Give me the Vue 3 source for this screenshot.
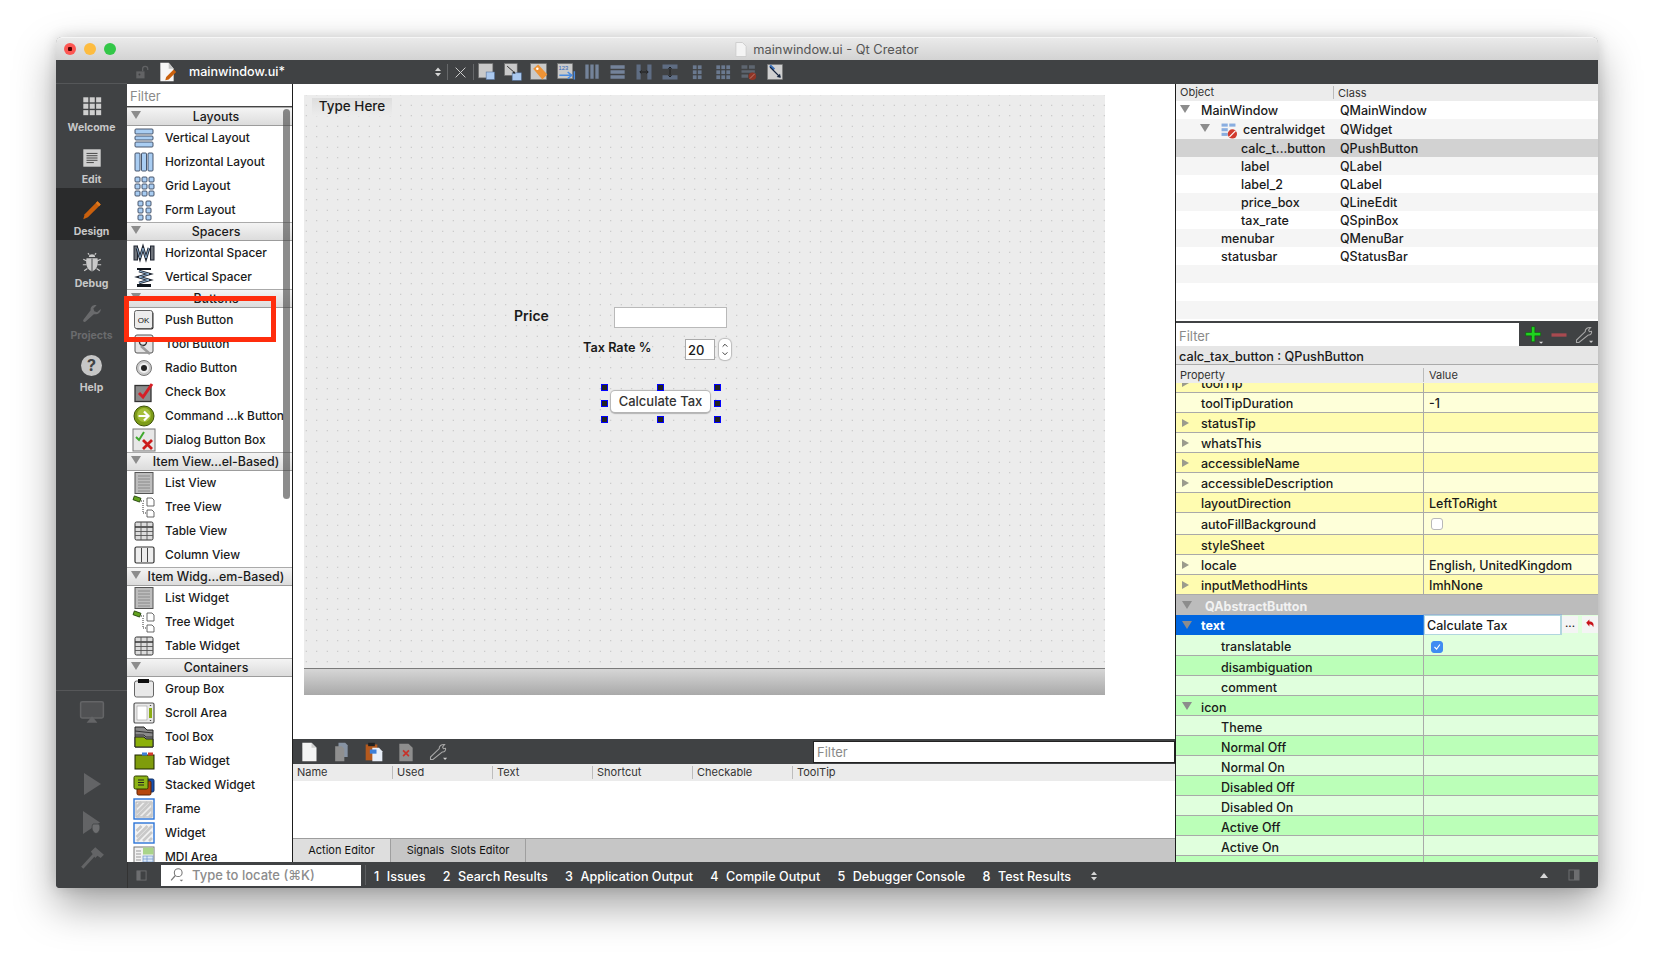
<script setup>
const bar = (x, y, w, h, c = '#a9cdf2', s = '#39465c') => `<rect x="${x}" y="${y}" width="${w}" height="${h}" rx="1" fill="${c}" stroke="${s}" stroke-width=".9"/>`
const hatch = `<g stroke="#c9c9c9" stroke-width="2.6"><path d="M4.500 10l5-5M4.500 16l11-11M5 20l15-15M11 20l9-9M17 20l3-3"/></g>`
const bug = (c) => `<path d="M8.6 6.5a3.4 3 0 0 1 6.8 0zM6 8h12c1 5 .2 13-6 14C5.800 21 5 13 6 8z" fill="${c}"/><path d="M12 8v14M6.500 11L2.500 9M17.500 11l4-2M6 15H2M18 15h4M7 19l-3.500 2.500M17 19l3.500 2.500M9 4L7.500 2.500M15 4l1.500-1.500" stroke="${c}" stroke-width="1.300" fill="none"/><path d="M12 8v14" stroke="#404244" stroke-width="1"/>`
const wrench = (c) => `<path d="M21.500 6.500l-4 3.500-3-1-1-3 3.500-3.500c-3.500-1-7 1.500-6.500 5.500L2.800 18c-1.500 1.500.8 3.700 2.300 2.300L14 12.200c4 1 8-2.200 7.500-5.700z" fill="${c}"/>`

const icons = {
  vl: bar(3, 3, 18, 5) + bar(3, 10, 18, 4) + bar(3, 16, 18, 5),
  hl: bar(3, 3, 5, 18) + bar(9.500, 3, 5, 18) + bar(16, 3, 5, 18),
  gl: [3, 10, 17].flatMap(x => [3, 10, 17].map(y => bar(x, y, 5, 5))).join(''),
  fl: [6, 14].flatMap(x => [3, 10, 17].map(y => bar(x, y, 5, 5))).join(''),
  hs: `<rect x="2" y="5" width="3.500" height="14" fill="#6f747b" stroke="#1f2530"/><rect x="18.500" y="5" width="3.500" height="14" fill="#6f747b" stroke="#1f2530"/><path d="M5 7l3 10 3-10 3 10 3-10" fill="none" stroke="#1f2530" stroke-width="2.800"/><path d="M5 7l3 10 3-10 3 10 3-10" fill="none" stroke="#9fc4e6" stroke-width=".8"/>`,
  vs: `<path d="M5 3h14v2H5zM5 19h14v3H5z" fill="#10151c"/><path d="M7 6l10 3-10 3 10 3-10 3" fill="none" stroke="#1f2530" stroke-width="2.800"/><path d="M7 6l10 3-10 3 10 3-10 3" fill="none" stroke="#9fc4e6" stroke-width=".9"/>`,
  ok: `<rect x="3.500" y="3.500" width="18" height="18" rx="2" fill="#2c2c2c"/><rect x="2.500" y="2.500" width="18" height="18" rx="2" fill="#ececec" stroke="#555" stroke-width=".9"/><text x="11.500" y="14.500" font-size="8" text-anchor="middle" fill="#111" font-family="Liberation Sans, sans-serif">OK</text>`,
  tool: `<rect x="3" y="3" width="18" height="18" rx="2" fill="#e4e4e4" stroke="#555"/><circle cx="11" cy="10" r="3.500" fill="none" stroke="#333" stroke-width="1.400"/><path d="M9 14l9 8" stroke="#999" stroke-width="2.500"/>`,
  radio: `<circle cx="12" cy="12" r="7.500" fill="#c9c9c9" stroke="#777"/><circle cx="12" cy="12" r="5" fill="#f0f0f0"/><circle cx="12" cy="12" r="3" fill="#222"/>`,
  check: `<rect x="3" y="5.500" width="16" height="16" fill="#8c8c8c" stroke="#333" stroke-width="1.300"/><path d="M7 13l4 4 9-13" fill="none" stroke="#d61f26" stroke-width="3"/>`,
  cmd: `<circle cx="12" cy="12" r="10" fill="#7d9c18" stroke="#3e5208"/><circle cx="12" cy="11" r="7" fill="#a4be3a"/><path d="M6.500 12h9M12 7.500l4.500 4.500-4.500 4.500" fill="none" stroke="#fff" stroke-width="2.200"/>`,
  dbb: `<rect x="1" y="1" width="22" height="22" fill="#e7e7e7" stroke="#777"/><path d="M4 9l3 3 5-8" fill="none" stroke="#3fa92d" stroke-width="2"/><path d="M11 12l9 9M20 12l-9 9" stroke="#cc1c1c" stroke-width="2.800"/>`,
  list: `<rect x="3" y="1.500" width="18" height="21" fill="#bdbdbd" stroke="#555"/><path d="M6 5h12M6 8h12M6 11h12M6 14h12M6 17h12M6 20h12" stroke="#8a8a8a"/>`,
  tree: `<rect x="1.500" y="2" width="7" height="4" transform="rotate(20 5 4)" fill="#62a21e" stroke="#1f3f08" stroke-width=".8"/><path d="M9 6h3M11 8v10h3" stroke="#333" stroke-dasharray="1 1" fill="none"/><path d="M15 3h5l2 2v6h-7zM15 15h5l2 2v5h-7z" fill="#fff" stroke="#444" stroke-width=".8"/>`,
  table: `<rect x="3" y="3" width="18" height="18" rx="1.500" fill="#dcdcdc" stroke="#333"/><path d="M3 8h18" stroke="#333" stroke-width="1.500"/><path d="M3 12.500h18M3 16.500h18M9 3v18M15 3v18" stroke="#555" stroke-width=".9"/>`,
  column: `<rect x="3" y="4" width="19" height="16" rx="1.500" fill="#eee" stroke="#333" stroke-width="1.200"/><path d="M9.500 5v14M15.500 5v14" stroke="#333" stroke-width=".9"/>`,
  group: `<rect x="2.500" y="4" width="19" height="16" rx="2" fill="#e8e8e8" stroke="#666"/><rect x="6" y="2" width="11" height="4" fill="#0e0e0e"/>`,
  scroll: `<rect x="2" y="2" width="20" height="20" rx="1.500" fill="#e8e8e8" stroke="#555" stroke-width="1.200"/><rect x="5" y="5" width="10" height="14" fill="#fff" stroke="#999" stroke-width=".6"/><rect x="17" y="7" width="3" height="10" fill="#8cad14"/><path d="M17.500 5l1-1 1 1zM17.500 19l1 1 1-1z" fill="#111"/>`,
  toolbox: `<path d="M3 2h9l3 3h6v17H3z" fill="#8a8a8a" stroke="#222"/><path d="M3 6l9 1 9 1M3 10h9l2 2h7" stroke="#333" fill="none"/><path d="M3 12h9l2 2h7v8H3z" fill="#8cb00a" stroke="#222"/>`,
  tab: `<rect x="3" y="6" width="19" height="14" fill="#7f9c0c" stroke="#1d2400"/><rect x="10" y="3.500" width="5" height="3" fill="#3f80d8"/><rect x="16" y="3.500" width="5" height="3" fill="#d23a2d"/>`,
  stacked: `<rect x="8" y="6" width="14" height="13" rx="1.500" fill="#164fb0" stroke="#0e2c60"/><rect x="5" y="8" width="14" height="14" rx="1.500" fill="#b5470e" stroke="#5d2504"/><rect x="2" y="3" width="14" height="13" rx="1.500" fill="#8db515" stroke="#2d3b03"/><path d="M6 7h6M6 9.500h6M6 12h6" stroke="#222"/>`,
  frame: `<rect x="2" y="2" width="20" height="20" fill="#f3f3f3" stroke="#2b74d8" stroke-width="1.400"/><rect x="4" y="5" width="16" height="15" fill="#eee" stroke="#8a8a8a" stroke-width=".6"/>` + hatch,
  widget: `<rect x="2" y="2" width="20" height="20" fill="#f3f3f3" stroke="#2b74d8" stroke-width="1.400"/>` + hatch,
  mdi: `<rect x="2" y="2" width="20" height="20" fill="#f2f2f2" stroke="#777"/><rect x="11" y="2.500" width="10.500" height="7" fill="#a9d48a"/><path d="M4 6h5M4 9h5M4 12h5M4 15h5M4 18h5" stroke="#999"/><rect x="11" y="11" width="10" height="9" fill="#dbe8f8" stroke="#6d94cc" stroke-width=".7"/><path d="M11 14h10M11 17h10M15 11v9" stroke="#6d94cc" stroke-width=".7"/>`,

  welcome: [2.500, 9.500, 16.500].flatMap(x => [2.500, 9.500, 16.500].map(y => `<rect x="${x}" y="${y}" width="5.500" height="5.500" fill="#cfcfcf"/>`)).join(''),
  edit: `<rect x="2.500" y="2.500" width="19" height="19" fill="#cfcfcf"/><path d="M6 7h12M6 9.500h12M6 12h12M6 14.500h12M6 17h8" stroke="#3b3b3b" stroke-width="1"/>`,
  design: `<path d="M18 2.500l3.500 3.500L7.500 20l-5 2 1.500-5.500z" fill="#c9600d"/><path d="M18 2.500l3.500 3.500-1.800 1.800-3.500-3.500z" fill="#e07b1f"/>`,
  debug: bug('#c9c9c9'),
  projects: wrench('#696a6c'),
  monitor: `<rect x="1.500" y="2.500" width="21" height="15" rx="1.500" fill="#505153" stroke="#646567" stroke-width="1.400"/><path d="M12 16l-5 6h10z" fill="#646567"/>`,
  run: `<path d="M4 1l17 11L4 23z" fill="#636466"/>`,
  drun: `<path d="M3 0l17 11.500L3 23z" fill="#636466"/><path d="M13 13h6c2 3 .8 9-3 9.500-3.800-.5-5-6.500-3-9.500z" fill="#6d6e70" stroke="#404244" stroke-width=".8"/>`,
  hammer: `<path d="M3 21l11-12" stroke="#636466" stroke-width="2.800"/><path d="M11 6l4-4 8 7-3 3-3-2-2 2z" fill="#636466"/>`,

  lock: `<rect x="2" y="10" width="13" height="11" fill="#626365"/><circle cx="7" cy="15" r="1.500" fill="#404244"/><path d="M12 10V6a4 4 0 0 1 8 0v2" fill="none" stroke="#626365" stroke-width="2"/>`,
  doc: `<path d="M4 1h10l6 7v15H4z" fill="#f6f6f6"/><path d="M14 1l6 7h-6z" fill="#c4c4c4"/><path d="M10 22l1-4 9-9 3 3-9 9z" fill="#c9600d"/>`,
  t1: `<rect x="2" y="2" width="17" height="17" fill="#c9c9c9" stroke="#777" stroke-width=".7"/><rect x="11" y="12" width="10" height="9" fill="#aac8ee" stroke="#55729c" stroke-width=".7"/>`,
  t2: `<rect x="2" y="2" width="15" height="14" fill="#c9c9c9" stroke="#777" stroke-width=".7"/><rect x="11" y="13" width="11" height="9" fill="#aac8ee" stroke="#55729c" stroke-width=".7"/><path d="M5 5l8 7" stroke="#222" stroke-width="1.100"/><path d="M15 14l-4-.5 2.500-2.500z" fill="#222"/>`,
  t3: `<rect x="2" y="2" width="19" height="19" fill="#c9c9c9" stroke="#777" stroke-width=".7"/><path d="M5 8l6-5 11 12-6 6z" fill="#ee9335"/><circle cx="10" cy="8" r="1.500" fill="#fff"/>`,
  t4: `<rect x="2" y="2" width="18" height="18" fill="#c9c9c9" stroke="#777" stroke-width=".7"/><text x="3" y="9" font-size="7" fill="#2f65b8" font-family="Liberation Sans, sans-serif">123</text><path d="M4 16h14M14 12l5 4-5 4M22 11v10" stroke="#4a8be0" stroke-width="1.800" fill="none"/>`,
  t5: `<path d="M4 3h4v17H4zM10 3h4v17h-4zM16 3h4v17h-4z" fill="#74839a"/>`,
  t6: `<path d="M3 4h17v4H3zM3 10h17v4H3zM3 16h17v4H3z" fill="#74839a"/>`,
  t7: `<path d="M3 3h5v18H3zM16 3h5v18h-5z" fill="#5f6d83"/><path d="M7 12h10M9 10l-2 2 2 2M15 10l2 2-2 2" stroke="#1c1c1c" stroke-width="1.100" fill="none"/>`,
  t8: `<path d="M3 3h18v5H3zM3 16h18v5H3z" fill="#5f6d83"/><path d="M12 6v12M10 8l2-2 2 2M10 16l2 2 2-2" stroke="#1c1c1c" stroke-width="1.100" fill="none"/>`,
  t9: [7, 13].flatMap(x => [4, 10, 16].map(y => `<rect x="${x}" y="${y}" width="4.500" height="4.500" fill="#6a798f"/>`)).join(''),
  t10: [4, 10, 16].flatMap(x => [4, 10, 16].map(y => `<rect x="${x}" y="${y}" width="4.500" height="4.500" fill="#6a798f"/>`)).join(''),
  t11: `<path d="M3 4h7v4H3zM12 4h7v4h-7zM3 10h16v3H3zM3 15h8v4H3z" fill="#5e6670"/><circle cx="16" cy="17" r="4.500" fill="#8f3526"/><path d="M13 20l6-6" stroke="#c58a7c" stroke-width="1"/>`,
  t12: `<rect x="3" y="3" width="18" height="18" fill="#d0d0d0" stroke="#777" stroke-width=".7"/><path d="M6 4l5 5" stroke="#3a6fb8" stroke-width="3"/><path d="M6 6l12 12" stroke="#14233c" stroke-width="1.300"/><path d="M19 19l-5-1 4-4z" fill="#14233c"/>`,

  plus: `<path d="M9 2h4v7h7v4h-7v7H9v-7H2V9h7z" fill="#1fd31f" stroke="#0d5c0d" stroke-width=".7"/><path d="M18 20h5l-2.500 2.500z" fill="#ddd"/>`,
  minus: `<rect x="3" y="10" width="18" height="4" fill="#a84a50"/>`,
  wtool: `<path d="M20 3l-2.500 3 1 2 2.500-.500c.8 2-1 5-4 4.500L6 21H3v-3L13.500 8c-.5-3 2.500-5.500 6.500-5z" fill="none" stroke="#a7a7a7" stroke-width="1.300"/><path d="M18 19h5l-2.500 2.500z" fill="#ccc"/>`,
  anew: `<path d="M4 1h11l6 6v16H4z" fill="#f4f4f4"/><path d="M15 1l6 6h-6z" fill="#cfcfcf"/>`,
  acopy: `<path d="M9 1h8l3 3v14H9z" fill="#8793a3"/><path d="M5 5h8l3 3v15H5z" fill="#8f8f8f"/>`,
  apaste: `<rect x="2" y="3" width="14" height="19" fill="#b5591d"/><rect x="5" y="1" width="8" height="4" fill="#222"/><path d="M10 7h8l4 4v12H10z" fill="#e8eef8"/><rect x="7" y="9" width="8" height="5" fill="#3d7fd9"/>`,
  adel: `<path d="M4 2h11l5 5v16H4z" fill="#8e8e8e"/><path d="M8.500 10l7 7M15.500 10l-7 7" stroke="#c8322a" stroke-width="2"/>`,
  reset: `<path d="M5 9l5-5v3c5 0 8 3 6 9-1-3-3-4.500-6-4.500V15z" fill="#c8121a"/>`,
  search: `<circle cx="13" cy="8" r="5.500" fill="none" stroke="#777" stroke-width="1.500"/><path d="M9 12l-6 7" stroke="#777" stroke-width="1.700"/><path d="M15 18h5l-2.500 2.500z" fill="#777"/>`,
  toggle: `<rect x="2" y="2" width="8" height="20" fill="#6d6e70"/><rect x="2" y="2" width="20" height="20" fill="none" stroke="#6d6e70" stroke-width="2"/>`,
  toggleR: `<rect x="12" y="2" width="10" height="20" fill="#6d6e70"/><rect x="2" y="2" width="20" height="20" fill="none" stroke="#6d6e70" stroke-width="2"/>`,
  stepper: `<path d="M12 3l6 7H6zM12 21l-6-7h12z" fill="#d6d6d6"/>`,
  close: `<path d="M3 3l18 18M21 3L3 21" stroke="#cfcfcf" stroke-width="1.800"/>`,
  central: `<rect x="2" y="2" width="8" height="4" fill="#8aaee0"/><rect x="12" y="2" width="8" height="4" fill="#8aaee0"/><rect x="2" y="8" width="8" height="4" fill="#8aaee0"/><rect x="2" y="14" width="8" height="4" fill="#8aaee0"/><circle cx="16" cy="15.500" r="6" fill="#d23a2d"/><path d="M12 19.500l8-8" stroke="#fff" stroke-width="1.500"/>`
}

const modes = [
  { k: 'welcome', l: 'Welcome' },
  { k: 'edit', l: 'Edit' },
  { k: 'design', l: 'Design', active: true },
  { k: 'debug', l: 'Debug' },
  { k: 'projects', l: 'Projects', dim: true }
]
const runIcons = ['run', 'drun', 'hammer']
const toolIcons = ['t1', 't2', 't3', 't4', 't5', 't6', 't7', 't8', 't9', 't10', 't11', 't12']

const sections = [
  { t: 'Layouts', items: [['vl', 'Vertical Layout'], ['hl', 'Horizontal Layout'], ['gl', 'Grid Layout'], ['fl', 'Form Layout']] },
  { t: 'Spacers', items: [['hs', 'Horizontal Spacer'], ['vs', 'Vertical Spacer']] },
  { t: 'Buttons', items: [['ok', 'Push Button'], ['tool', 'Tool Button'], ['radio', 'Radio Button'], ['check', 'Check Box'], ['cmd', 'Command ...k Button'], ['dbb', 'Dialog Button Box']] },
  { t: 'Item View...el-Based)', items: [['list', 'List View'], ['tree', 'Tree View'], ['table', 'Table View'], ['column', 'Column View']] },
  { t: 'Item Widg...em-Based)', items: [['list', 'List Widget'], ['tree', 'Tree Widget'], ['table', 'Table Widget']] },
  { t: 'Containers', items: [['group', 'Group Box'], ['scroll', 'Scroll Area'], ['toolbox', 'Tool Box'], ['tab', 'Tab Widget'], ['stacked', 'Stacked Widget'], ['frame', 'Frame'], ['widget', 'Widget'], ['mdi', 'MDI Area']] }
]

const objects = [
  { n: 'MainWindow', c: 'QMainWindow', pad: 25, arrow: 10, h: 18 },
  { n: 'centralwidget', c: 'QWidget', pad: 67, arrow: 30, ico: true, h: 20 },
  { n: 'calc_t...button', c: 'QPushButton', pad: 65, h: 18, sel: true },
  { n: 'label', c: 'QLabel', pad: 65, h: 18 },
  { n: 'label_2', c: 'QLabel', pad: 65, h: 18 },
  { n: 'price_box', c: 'QLineEdit', pad: 65, h: 18 },
  { n: 'tax_rate', c: 'QSpinBox', pad: 65, h: 18 },
  { n: 'menubar', c: 'QMenuBar', pad: 45, h: 18 },
  { n: 'statusbar', c: 'QStatusBar', pad: 45, h: 18 },
  { n: '', c: '', pad: 0, h: 18 },
  { n: '', c: '', pad: 0, h: 18 },
  { n: '', c: '', pad: 0, h: 18 }
]

const props = [
  { n: 'toolTip', t: 'yd', a: 'r', h: 20 },
  { n: 'toolTipDuration', v: '-1', t: 'yl', h: 20 },
  { n: 'statusTip', t: 'yd', a: 'r', h: 20 },
  { n: 'whatsThis', t: 'yl', a: 'r', h: 20 },
  { n: 'accessibleName', t: 'yd', a: 'r', h: 20 },
  { n: 'accessibleDescription', t: 'yl', a: 'r', h: 20 },
  { n: 'layoutDirection', v: 'LeftToRight', t: 'yd', h: 20 },
  { n: 'autoFillBackground', t: 'yl', box: true, h: 22 },
  { n: 'styleSheet', t: 'yd', h: 20 },
  { n: 'locale', v: 'English, UnitedKingdom', t: 'yl', a: 'r', h: 20 },
  { n: 'inputMethodHints', v: 'ImhNone', t: 'yd', a: 'r', h: 20 },
  { n: 'QAbstractButton', t: 'head', a: 'd', h: 20.500 },
  { n: 'text', t: 'sel', a: 'd', h: 19.500, edit: true },
  { n: 'translatable', t: 'gl', sub: true, checked: true, h: 21.500 },
  { n: 'disambiguation', t: 'gd', sub: true, h: 20 },
  { n: 'comment', t: 'gl', sub: true, h: 20 },
  { n: 'icon', t: 'gd', a: 'd', h: 20 },
  { n: 'Theme', t: 'gl', sub: true, h: 20 },
  { n: 'Normal Off', t: 'gd', sub: true, h: 20 },
  { n: 'Normal On', t: 'gl', sub: true, h: 20 },
  { n: 'Disabled Off', t: 'gd', sub: true, h: 20 },
  { n: 'Disabled On', t: 'gl', sub: true, h: 20 },
  { n: 'Active Off', t: 'gd', sub: true, h: 20 },
  { n: 'Active On', t: 'gl', sub: true, h: 20 },
  { n: '', t: 'gd', sub: true, h: 20 }
]
const rowLine = (p) => p.h + (p.t[0] === 'y' ? 2 : 3) + 'px'

const actionCols = ['Name', 'Used', 'Text', 'Shortcut', 'Checkable', 'ToolTip']
const outputs = [['1', 'Issues'], ['2', 'Search Results'], ['3', 'Application Output'], ['4', 'Compile Output'], ['5', 'Debugger Console'], ['8', 'Test Results']]
const handles = [[296.5, 288.5], [352.5, 288.5], [409.5, 288.5], [296.5, 304.5], [409.5, 304.5], [296.5, 320.5], [352.5, 320.5], [409.5, 320.5]]
</script>

<template>
  <div class="page">
    <div class="window">
      <header class="titlebar">
        <div class="lights"><i class="red"></i><i class="yellow"></i><i class="green"></i></div>
        <div class="title">
          <svg class="titledoc" viewBox="0 0 12 16"><path d="M.5.500h7l4 4v11H.5z" fill="#f4f4f4" stroke="#ccc" /></svg>
          <span>mainwindow.ui - Qt Creator</span>
        </div>
      </header>

      <div class="body">
        <aside class="sidebar">
          <div class="side-top"></div>
          <div v-for="m in modes" :key="m.k" class="mode" :class="{ active: m.active, dim: m.dim }">
            <svg class="mode-ic" viewBox="0 0 24 24" v-html="icons[m.k]"></svg>
            <span>{{ m.l }}</span>
          </div>
          <div class="mode">
            <div class="help-ic">?</div>
            <span>Help</span>
          </div>
          <div class="side-fill"></div>
          <div class="side-run">
            <svg class="monitor" viewBox="0 0 24 24" v-html="icons.monitor"></svg>
            <svg v-for="r in runIcons" :key="r" class="run-ic" :class="r" viewBox="0 0 24 24" v-html="icons[r]"></svg>
          </div>
        </aside>

        <div class="main">
          <div class="toolbar">
            <svg class="lock" viewBox="0 0 22 22" v-html="icons.lock"></svg>
            <svg class="docic" viewBox="0 0 24 24" v-html="icons.doc"></svg>
            <span class="filename">mainwindow.ui*</span>
            <svg class="tstep" viewBox="0 0 24 24" v-html="icons.stepper"></svg>
            <i class="tsep"></i>
            <svg class="tclose" viewBox="0 0 24 24" v-html="icons.close"></svg>
            <i class="tsep"></i>
            <div class="ticons">
              <svg v-for="t in toolIcons" :key="t" class="tic" viewBox="0 0 24 24" v-html="icons[t]"></svg>
            </div>
          </div>

          <div class="workspace">
            <section class="widgetbox">
              <div class="wb-filter">Filter</div>
              <div v-for="s in sections" :key="s.t">
                <div class="wb-head"><i class="tri-d"></i><span>{{ s.t }}</span></div>
                <div v-for="it in s.items" :key="it[1]" class="wb-item">
                  <svg class="wb-ic" viewBox="0 0 24 24" v-html="icons[it[0]]"></svg>
                  <span>{{ it[1] }}</span>
                </div>
              </div>
              <div class="wb-scroll"></div>
            </section>

            <section class="center">
              <div class="canvas">
                <div class="form">
                  <div class="menu">Type Here</div>
                  <div class="w-price">Price</div>
                  <div class="w-line"></div>
                  <div class="w-tax">Tax Rate %</div>
                  <div class="w-spin">20</div>
                  <div class="w-step"><svg viewBox="0 0 12 22"><path d="M3.500 8L6 5.500 8.500 8M3.500 14L6 16.500 8.500 14" fill="none" stroke="#333" stroke-width="1" /></svg></div>
                  <div class="w-btn">Calculate Tax</div>
                  <i v-for="(h, i) in handles" :key="i" class="handle" :style="{ left: h[0] + 'px', top: h[1] + 'px' }"></i>
                  <div class="form-status"></div>
                </div>
              </div>

              <div class="actions">
                <div class="act-bar">
                  <div class="act-icons">
                    <svg class="act-ic" viewBox="0 0 24 24" v-html="icons.anew"></svg>
                    <svg class="act-ic" viewBox="0 0 24 24" v-html="icons.acopy"></svg>
                    <svg class="act-ic" viewBox="0 0 24 24" v-html="icons.apaste"></svg>
                    <svg class="act-ic" viewBox="0 0 24 24" v-html="icons.adel"></svg>
                    <svg class="act-ic" viewBox="0 0 24 24" v-html="icons.wtool"></svg>
                  </div>
                  <div class="act-filter">Filter</div>
                </div>
                <div class="act-cols"><span v-for="c in actionCols" :key="c">{{ c }}</span></div>
                <div class="act-empty"></div>
                <div class="tabs">
                  <span class="tab on">Action Editor</span>
                  <span class="tab">Signals&nbsp;&nbsp;Slots Editor</span>
                </div>
              </div>
            </section>

            <section class="right">
              <div class="ins-head"><span class="c1">Object</span><span class="c2">Class</span></div>
              <div v-for="(o, i) in objects" :key="i" class="ins-row" :class="{ alt: i % 2 === 1, sel: o.sel }" :style="{ height: o.h + 'px' }">
                <div class="c1" :style="{ paddingLeft: o.pad + 'px' }">
                  <i v-if="o.arrow" class="tri-d abs" :style="{ left: o.arrow - 6 + 'px' }"></i>
                  <svg v-if="o.ico" class="ins-ic" viewBox="0 0 22 22" v-html="icons.central"></svg>
                  {{ o.n }}
                </div>
                <div class="c2">{{ o.c }}</div>
              </div>
              <div class="darkstrip"></div>
              <div class="prop-filter">
                <div class="pf-input">Filter</div>
                <svg class="pf-ic" viewBox="0 0 24 24" v-html="icons.plus"></svg>
                <svg class="pf-ic" viewBox="0 0 24 24" v-html="icons.minus"></svg>
                <svg class="pf-ic" viewBox="0 0 24 24" v-html="icons.wtool"></svg>
              </div>
              <div class="classrow">calc_tax_button : QPushButton</div>
              <div class="prop-head"><span class="p1">Property</span><span class="p2">Value</span></div>
              <div class="props">
                <div class="props-inner">
                  <div v-for="p in props" :key="p.n" class="prop" :class="p.t" :style="{ height: p.h + 'px', lineHeight: rowLine(p) }">
                    <div class="p1" :class="{ sub: p.sub }">
                      <i v-if="p.a === 'r'" class="tri-r"></i>
                      <i v-if="p.a === 'd'" class="tri-d abs2"></i>
                      {{ p.n }}
                    </div>
                    <div class="p2">
                      <template v-if="p.edit">
                        <span class="ed-input">Calculate Tax</span>
                        <span class="ed-btn">...</span>
                        <span class="ed-btn red"><svg viewBox="0 0 22 22" v-html="icons.reset"></svg></span>
                      </template>
                      <i v-else-if="p.box" class="cb"></i>
                      <i v-else-if="p.checked" class="cb on"><svg viewBox="0 0 12 12"><path d="M3 6l2.500 2.500L9.500 3" fill="none" stroke="#fff" stroke-width="1.300" /></svg></i>
                      <template v-else>{{ p.v }}</template>
                    </div>
                  </div>
                </div>
              </div>
            </section>
          </div>

          <footer class="status">
            <svg class="st-toggle" viewBox="0 0 24 24" v-html="icons.toggle"></svg>
            <div class="locator">
              <svg class="loc-ic" viewBox="0 0 24 24" v-html="icons.search"></svg>
              <span>Type to locate (⌘K)</span>
            </div>
            <i class="st-sep"></i>
            <div class="outs">
              <span v-for="o in outputs" :key="o[0]" class="out"><b>{{ o[0] }}</b>{{ o[1] }}</span>
              <svg class="out-step" viewBox="0 0 24 24" v-html="icons.stepper"></svg>
            </div>
            <div class="st-right">
              <i class="up"></i>
              <svg class="st-toggle2" viewBox="0 0 24 24" v-html="icons.toggleR"></svg>
            </div>
          </footer>
        </div>
      </div>

      <div class="redbox"></div>
    </div>
  </div>
</template>

<style>
html, body { margin: 0; background: #fff; }
</style>

<style scoped>
.page {
  width: 1654px; height: 962px; box-sizing: border-box; padding: 37px 56px 0;
  background: #fff; overflow: hidden;
  font-family: Inter, "Liberation Sans", sans-serif; font-size: 12px; color: #1a1a1a;
}
.window {
  position: relative; width: 1542px; height: 851px; display: flex; flex-direction: column;
  border-radius: 6px 6px 4px 4px;
  box-shadow: 0 18px 42px rgba(0,0,0,.36), 0 0 14px rgba(0,0,0,.14);
  background: #404244;
}
.titlebar {
  height: 23px; flex: none; position: relative; display: flex; align-items: center; justify-content: center;
  background: linear-gradient(#ebebeb, #d3d3d3); border-radius: 6px 6px 0 0;
  box-shadow: inset 0 1px 0 #f6f6f6;
}
.lights { position: absolute; left: 8px; top: 6px; display: flex; gap: 8px; }
.lights i { width: 12px; height: 12px; border-radius: 50%; display: block; }
.red { background: radial-gradient(circle, #4d0000 0 2px, #fc5753 2.500px); }
.yellow { background: #fdbc40; }
.green { background: #33c748; }
.title { display: flex; align-items: center; gap: 6px; font-size: 12.800px; color: #555; padding-top: 1px; }
.titledoc { width: 12px; height: 15px; }

.body { flex: 1; display: flex; min-height: 0; }
.sidebar { width: 71px; flex: none; display: flex; flex-direction: column; background: #404244; border-radius: 0 0 0 4px; }
.side-top { height: 23px; border-bottom: 1px solid #555759; }
.mode { height: 52px; display: flex; flex-direction: column; align-items: center; color: #c8c8c8; font-size: 10.500px; font-weight: 700; box-sizing: border-box; padding-top: 11px; }
.mode-ic { width: 22px; height: 22px; display: block; }
.mode span { margin-top: 4px; line-height: 13px; }
.mode.active { background: #2a2b2c; }
.mode.dim { color: #6a6b6d; }
.help-ic { width: 21px; height: 21px; margin-bottom: 1px; border-radius: 50%; background: #c6c6c6; color: #404244; font-size: 16px; font-weight: 700; line-height: 21px; text-align: center; }
.side-fill { flex: 1; }
.side-run { height: 198px; flex: none; border-top: 1px solid #565759; display: flex; flex-direction: column; align-items: center; box-sizing: border-box; padding-top: 8px; }
.monitor { width: 26px; height: 26px; margin-bottom: 47px; }
.run-ic { width: 24px; height: 24px; margin-bottom: 15px; }
.run-ic.drun { margin-bottom: 10px; }
.run-ic.hammer { width: 26px; height: 26px; }

.main { flex: 1; min-width: 0; display: flex; flex-direction: column; }
.toolbar { height: 24px; flex: none; display: flex; align-items: center; background: #404244; }
.lock { width: 14px; height: 14px; margin-left: 8px; }
.docic { width: 20px; height: 20px; margin-left: 8px; }
.filename { width: 244px; margin-left: 12px; margin-top: -1px; color: #fff; font-size: 12.600px; font-weight: 500; }
.tstep { width: 12px; height: 14px; margin-left: -1px; }
.tsep { width: 1px; height: 16px; background: #66686a; }
.tstep + .tsep { margin-left: 3px; }
.tclose { width: 13px; height: 13px; margin: 0 6px; }
.ticons { display: flex; gap: 6.200px; margin-left: 3px; }
.tic { width: 20px; height: 20px; }

.workspace { flex: 1; min-height: 0; display: flex; }
.widgetbox { width: 165px; flex: none; background: #fff; border-right: 1px solid #1d1d1d; position: relative; overflow: hidden; }
.wb-filter { height: 21.500px; box-sizing: content-box; line-height: 25px; padding-left: 3px; border-bottom: 1px solid #444; color: #8a8a8a; font-size: 13px; overflow: hidden; }
.wb-head { height: 19px; box-sizing: border-box; position: relative; display: flex; align-items: center; justify-content: center; padding-left: 13px; background: linear-gradient(#f4f4f4, #dcdcdc); border-top: 1px solid #aaa; border-bottom: 1px solid #9c9c9c; font-size: 12.400px; font-weight: 500; white-space: nowrap; }
.wb-item { height: 24px; display: flex; align-items: center; padding-left: 5px; white-space: nowrap; font-size: 11.900px; font-weight: 500; }
.wb-ic { width: 24px; height: 24px; flex: none; margin-right: 9px; }
.wb-scroll { position: absolute; right: 2px; top: 25px; width: 7px; height: 390px; border-radius: 4px; background: rgba(70,70,70,.62); }
.tri-d { display: block; width: 0; height: 0; border-left: 5px solid transparent; border-right: 5px solid transparent; border-top: 8px solid #8c8c8c; }
.wb-head .tri-d { position: absolute; left: 4px; top: 3px; }
.tri-r { position: absolute; left: 6px; top: 6px; width: 0; height: 0; border-top: 4.500px solid transparent; border-bottom: 4.500px solid transparent; border-left: 7px solid #9b9b8c; }

.center { width: 882px; flex: none; display: flex; flex-direction: column; background: #fff; }
.canvas { flex: 1; min-height: 0; padding: 11px 0 0 11px; }
.form {
  position: relative; width: 801px; height: 600px; background-color: #ececec;
  background-image: radial-gradient(circle, #b2b2b2 .5px, rgba(178,178,178,0) .95px);
  background-size: 10.500px 10.500px; background-position: -3px 5px;
}
.menu { position: absolute; left: 8px; top: 3px; width: 80px; height: 18px; line-height: 16px; text-align: center; box-sizing: border-box; font-size: 13.500px; font-weight: 500; background: linear-gradient(#dedede, #ececec); }
.w-price { position: absolute; left: 210px; top: 212px; font-size: 14px; font-weight: 600; }
.w-line { position: absolute; left: 310px; top: 212px; width: 113px; height: 21px; box-sizing: border-box; background: #fff; border: 1px solid #b9b9b9; }
.w-tax { position: absolute; left: 279px; top: 245px; font-size: 12.700px; font-weight: 600; }
.w-spin { position: absolute; left: 381px; top: 243.500px; width: 30px; height: 21px; box-sizing: border-box; background: #fff; border: 1px solid #aaa; font-size: 13px; font-weight: 500; line-height: 20px; padding-left: 2px; }
.w-step { position: absolute; left: 415px; top: 243.500px; width: 12px; height: 21px; background: #fff; border-radius: 5px; box-shadow: 0 0 1px 1px #bbb; }
.w-step svg { display: block; width: 12px; height: 21px; }
.w-btn { position: absolute; left: 307px; top: 296px; width: 99px; height: 21px; line-height: 20px; text-align: center; background: #fff; border-radius: 4px; box-shadow: 0 .500px 1px 1px #b4b4b4; font-size: 13px; font-weight: 500; color: #333; }
.handle { position: absolute; width: 5px; height: 5px; background: #222; border: 1px solid #0000ff; }
.form-status { position: absolute; left: 0; right: 0; bottom: 0; height: 27px; box-sizing: border-box; border-top: 1px solid #7a7a7a; background: linear-gradient(#d6d6d6, #a9a9a9); }

.actions { height: 123px; flex: none; display: flex; flex-direction: column; }
.act-bar { height: 25px; flex: none; background: #404244; display: flex; align-items: center; }
.act-icons { display: flex; gap: 12.300px; padding-left: 6px; width: 514px; box-sizing: content-box; }
.act-ic { width: 20px; height: 20px; flex: none; }
.act-filter { flex: 1; height: 22px; box-sizing: border-box; background: #fff; border: 1px solid #222; padding-left: 3px; line-height: 20px; color: #8a8a8a; font-size: 13px; }
.act-cols { height: 17px; flex: none; background: #ebebeb; display: flex; align-items: center; font-size: 11px; color: #333; }
.act-cols span { width: 100px; box-sizing: border-box; padding-left: 4px; border-right: 1px solid #bdbdbd; line-height: 13px; }
.act-cols span:last-child { border: 0; }
.act-empty { flex: 1; }
.tabs { height: 24px; flex: none; display: flex; background: #c6c6c6; border-top: 1px solid #9d9d9d; box-sizing: border-box; font-size: 11px; color: #111; }
.tab { width: 134px; text-align: center; line-height: 22px; border-right: 1px solid #9f9f9f; }
.tab.on { width: 97px; background: #dedede; }

.right { flex: 1; min-width: 0; background: #fff; border-left: 1px solid #1d1d1d; display: flex; flex-direction: column; }
.ins-head { height: 17px; flex: none; background: #ececec; display: flex; align-items: center; font-size: 11px; color: #333; }
.ins-head .c1 { width: 158px; padding-left: 4px; box-sizing: border-box; border-right: 1px solid #bbb; line-height: 13px; }
.ins-head .c2 { padding-left: 4px; }
.ins-row { display: flex; align-items: center; flex: none; font-size: 12.500px; font-weight: 500; }
.ins-row.alt { background: #f5f5f5; }
.ins-row.sel { background: #d2d2d2; }
.ins-row .c1 { position: relative; width: 164px; box-sizing: border-box; white-space: nowrap; display: flex; align-items: center; }
.abs { position: absolute; top: 2px; }
.ins-ic { width: 17px; height: 17px; position: absolute; left: 44px; top: 0; }
.darkstrip { height: 4px; flex: none; background: linear-gradient(#fff 0 2.500px, #404244 2.500px); }
.prop-filter { height: 23px; flex: none; background: #404244; display: flex; align-items: center; }
.pf-input { width: 343px; height: 23px; background: #fff; color: #8a8a8a; font-size: 13px; line-height: 26px; padding-left: 3px; box-sizing: border-box; margin-right: 3px; overflow: hidden; }
.pf-ic { width: 20px; height: 20px; margin: 0 3px 0 2px; flex: none; }
.classrow { height: 19px; flex: none; box-sizing: border-box; padding-left: 3px; padding-top: 2px; line-height: 18px; font-size: 12.700px; font-weight: 500; background: #e6e6e6; border-bottom: 1px solid #aaa; overflow: hidden; }
.prop-head { height: 18px; flex: none; display: flex; align-items: center; background: #ececec; font-size: 11px; color: #333; padding-top: 1px; box-sizing: border-box; }
.prop-head .p1 { width: 248px; box-sizing: border-box; padding-left: 4px; border-right: 1px solid #bbb; line-height: 14px; }
.prop-head .p2 { padding-left: 5px; }
.props { flex: 1; min-height: 0; overflow: hidden; }
.props-inner { margin-top: -10.500px; }
.prop { display: flex; box-sizing: border-box; border-bottom: 1px solid #a9a9a9; font-size: 12.500px; font-weight: 500; position: relative; }
.prop .p1 { width: 248px; flex: none; box-sizing: border-box; padding-left: 25px; white-space: nowrap; border-right: 1px solid #a9a9a9; }
.prop .p1.sub { padding-left: 45px; }
.prop .p2 { flex: 1; min-width: 0; padding-left: 5px; position: relative; white-space: nowrap; }
.yl { background: #feffd9; }
.yd { background: #fffcb0; }
.gl { background: #e0ffdd; }
.gd { background: #bbffb8; }
.head { background: #bcbcbc; color: #f2f2f2; font-weight: 700; border-bottom: 0; }
.head .p1 { border-right: 0; padding-left: 29px; }
.sel .p1 { background: #0066e0; color: #fff; font-weight: 700; border-right: 0; }
.sel { background: #e0ffdd; border-bottom: 0; }
.sel .p2 { padding-left: 0; }
.abs2 { position: absolute; left: 6px; top: 6px; }
.ed-input { position: absolute; left: 1px; top: 1px; width: 135px; height: 18px; box-sizing: border-box; padding-left: 2px; background: #fff; line-height: 19px; box-shadow: 0 0 0 2px rgba(120,165,225,.45); }
.ed-btn { position: absolute; left: 138px; top: 1px; width: 16px; height: 17px; text-align: center; line-height: 15px; background: #f4f4f4; font-size: 11px; }
.ed-btn.red { left: 158px; width: 16px; }
.ed-btn.red svg { width: 14px; height: 14px; display: block; margin: 1px; }
.cb { position: absolute; left: 7px; top: 5px; width: 12px; height: 12px; display: block; box-sizing: border-box; border-radius: 3px; background: #fff; border: 1px solid #b8b8b8; }
.cb.on { top: 6px; background: #3f8cf2; border-color: #3f8cf2; }
.cb.on svg { display: block; width: 10px; height: 10px; }

.status { height: 26px; flex: none; display: flex; align-items: center; background: #404244; border-left: 1px solid #333; box-sizing: border-box; position: relative; border-radius: 0 0 4px 0; }
.st-toggle { width: 11px; height: 11px; margin-left: 8px; flex: none; }
.locator { width: 200px; height: 21px; margin-left: 14px; flex: none; background: #fff; display: flex; align-items: center; color: #8c8c8c; font-size: 13px; font-weight: 500; }
.loc-ic { width: 17px; height: 17px; margin: 0 6px 0 8px; flex: none; }
.st-sep { width: 1px; height: 20px; background: #5c5e60; margin-left: 4px; }
.outs { display: flex; align-items: center; gap: 17.300px; margin-left: 8px; padding-top: 2px; color: #fff; font-size: 12.600px; font-weight: 500; white-space: nowrap; }
.out b { font-weight: 500; margin-right: 7.500px; }
.out-step { width: 12px; height: 12px; }
.st-right { margin-left: auto; display: flex; align-items: center; padding-right: 18px; gap: 20px; }
.up { display: block; width: 0; height: 0; border-left: 4px solid transparent; border-right: 4px solid transparent; border-bottom: 5px solid #d8d8d8; }
.st-toggle2 { width: 12px; height: 12px; }

.redbox { position: absolute; left: 68px; top: 259px; width: 152px; height: 46px; box-sizing: border-box; border: 5px solid #ff2d0d; pointer-events: none; }
</style>
